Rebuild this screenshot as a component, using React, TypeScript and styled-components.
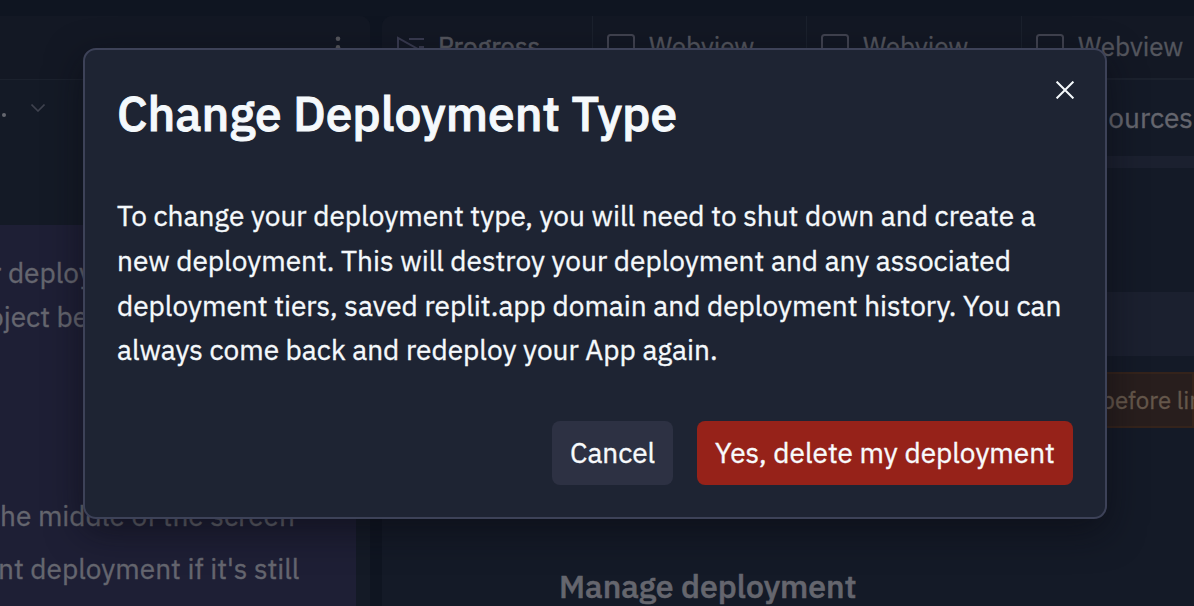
import React from 'react';
import styled, { createGlobalStyle } from 'styled-components';

const Global = createGlobalStyle`
  * { box-sizing: border-box; }
  body { margin: 0; background: #0f1521; font-family: "IBM Plex Sans", "Open Sans", "Noto Sans", sans-serif; -webkit-font-smoothing: antialiased; }
`;

const Screen = styled.div`
  position: relative;
  width: 1194px;
  height: 606px;
  overflow: hidden;
  padding-top: 16px;
  display: flex;
  gap: 12px;
  background: #0f1521;
`;

const Text = styled.span<{ $shift?: number; $size?: number; $weight?: number; $stroke?: number }>`
  display: block;
  white-space: nowrap;
  font-size: ${p => p.$size ?? 28}px;
  font-weight: ${p => p.$weight ?? 400};
  -webkit-text-stroke: ${p => p.$stroke ?? 0.35}px currentColor;
  margin-left: ${p => p.$shift ?? 0}px;
`;

const SidePane = styled.section`
  width: 370px;
  flex: none;
  background: #141a26;
  border-radius: 0 10px 0 0;
  overflow: hidden;
  color: #65666f;
`;

const SideHeader = styled.header`
  height: 64px;
  padding: 19px 25px 0 0;
  display: flex;
  justify-content: flex-end;
  background: #131824;
  border-bottom: 1px solid #1b212d;
`;

const Crumb = styled.div`
  height: 145px;
  padding-top: 24px;
  display: flex;
  align-items: flex-start;
`;

const CrumbDot = styled.span`
  width: 4px;
  height: 4px;
  margin: 9px 25px 0 2px;
  border-radius: 50%;
  background: #65676f;
`;

const Message = styled.div`
  width: 356px;
  height: 381px;
  padding-top: 26px;
  background: #1e1f35;
`;

const Paragraph = styled.div<{ $gap?: number; $line?: number }>`
  margin-top: ${p => p.$gap ?? 0}px;
  line-height: ${p => p.$line ?? 44}px;
`;

const MainPane = styled.section`
  flex: 1;
  min-width: 0;
  background: #141a27;
  border-radius: 10px 0 0 0;
  overflow: hidden;
  color: #65666e;
`;

const Tabs = styled.nav`
  display: flex;
  height: 64px;
  background: #131824;
  border-bottom: 2px solid #1b212d;
`;

const Tab = styled.div<{ $width: number }>`
  flex: none;
  width: ${p => p.$width}px;
  padding: 0 0 2px 14px;
  display: flex;
  align-items: center;
  gap: 14px;
  border-right: 1px solid #1b212d;
  color: #54565e;
  svg { flex: none; margin-top: 2px; }
`;

const SubNav = styled.div`
  height: 76px;
  padding: 0 1px 2px 0;
  display: flex;
  align-items: center;
  justify-content: flex-end;
`;

const Band = styled.div<{ $height: number }>`
  height: ${p => p.$height}px;
  background: #1b202f;
`;

const Warning = styled.div`
  height: 56px;
  margin: 16px 0 0 40px;
  padding-left: 677px;
  border: 2px solid #34231b;
  background: #281e1d;
  color: #65574b;
  line-height: 53px;
`;

const Space = styled.div`
  height: 124px;
`;

const SectionTitle = styled.h2`
  margin: 138px 0 0 177px;
  line-height: 40px;
  font-size: inherit;
`;

const Overlay = styled.div`
  position: absolute;
  inset: 0;
  padding: 48px 0 0 83px;
`;

const Dialog = styled.div`
  width: 1024px;
  height: 471px;
  padding: 32px;
  display: flex;
  flex-direction: column;
  border: 2px solid #3d4258;
  border-radius: 13px;
  background: #1e2433;
  color: #f5f9fc;
  box-shadow: 0 12px 36px rgba(9, 9, 16, 0.55);
`;

const DialogHeader = styled.div`
  display: flex;
  justify-content: space-between;
  align-items: flex-start;
  height: 112px;
`;

const Title = styled.h1`
  margin: 0;
  line-height: 62px;
  font-size: inherit;
`;

const Close = styled.button`
  width: 18px;
  height: 18px;
  margin: -1px -1px 0 0;
  padding: 0;
  border: 0;
  background: none;
  color: inherit;
  svg { display: block; }
`;

const Body = styled.div`
  line-height: 44.8px;
`;

const Actions = styled.div`
  margin-top: auto;
  display: flex;
  justify-content: flex-end;
  gap: 24px;
`;

const Button = styled.button<{ $danger?: boolean }>`
  width: ${p => (p.$danger ? 376 : 121)}px;
  height: 64px;
  padding: 0 0 0 18px;
  border: 0;
  border-radius: 8px;
  font-family: inherit;
  text-align: left;
  line-height: 64px;
  color: #f8fafc;
  background: ${p => (p.$danger ? '#962219' : '#2d3143')};
`;

const Window = () => (
  <svg width="28" height="26" viewBox="0 0 28 26" fill="none" stroke="#414350" strokeWidth="2">
    <rect x="1" y="1" width="26" height="24" rx="2.5" />
  </svg>
);

const Play = () => (
  <svg width="28" height="26" viewBox="0 0 28 26" fill="none" stroke="#393b50" strokeWidth="2">
    <path d="M2 4V24L20 14Z M13 5H28 M23 13H28 M19 21H28" />
  </svg>
);

const webviews = [214, 215, 215];

export default function App() {
  return (
    <>
      <Global />
      <Screen>
        <SidePane>
          <SideHeader>
            <svg width="12" height="24" fill="#56575d">
              <circle cx="5" cy="3.7" r="2.3" />
              <circle cx="5" cy="12.4" r="2.3" />
              <circle cx="5" cy="21.1" r="2.3" />
            </svg>
          </SideHeader>
          <Crumb>
            <CrumbDot />
            <svg width="14" height="8" fill="none" stroke="#3f424e" strokeWidth="1.6">
              <path d="M.5.5 7 7 13.5.5" />
            </svg>
          </Crumb>
          <Message>
            <Paragraph>
              <Text $shift={-9}>r deploy</Text>
              <Text $shift={-12}>oject be</Text>
            </Paragraph>
            <Paragraph $gap={150} $line={53}>
              <Text>he middle of the screen</Text>
              <Text $shift={-2}>nt deployment if it's still</Text>
            </Paragraph>
          </Message>
        </SidePane>
        <MainPane>
          <Tabs>
            <Tab $width={211}><Play /><Text $size={26} $stroke={0.6}>Progress</Text></Tab>
            {webviews.map((width, i) => (
              <Tab key={i} $width={width}><Window /><Text $size={26}>Webview</Text></Tab>
            ))}
          </Tabs>
          <SubNav><Text>ources</Text></SubNav>
          <Band $height={12} />
          <Space />
          <Band $height={64} />
          <Warning><Text $size={24}>before lin</Text></Warning>
          <SectionTitle><Text $size={32} $weight={500} $stroke={0.6}>Manage deployment</Text></SectionTitle>
        </MainPane>
        <Overlay>
          <Dialog role="dialog" aria-modal="true">
            <DialogHeader>
              <Title><Text $size={48} $weight={500} $stroke={0.9}>Change Deployment Type</Text></Title>
              <Close aria-label="Close">
                <svg width="18" height="18" fill="none" stroke="currentColor" strokeWidth="2">
                  <path d="M.6.6 17.4 17.4 M17.4.6.6 17.4" />
                </svg>
              </Close>
            </DialogHeader>
            <Body>
              <Text>To change your deployment type, you will need to shut down and create a</Text>
              <Text>new deployment. This will destroy your deployment and any associated</Text>
              <Text>deployment tiers, saved replit.app domain and deployment history. You can</Text>
              <Text>always come back and redeploy your App again.</Text>
            </Body>
            <Actions>
              <Button><Text>Cancel</Text></Button>
              <Button $danger><Text>Yes, delete my deployment</Text></Button>
            </Actions>
          </Dialog>
        </Overlay>
      </Screen>
    </>
  );
}
